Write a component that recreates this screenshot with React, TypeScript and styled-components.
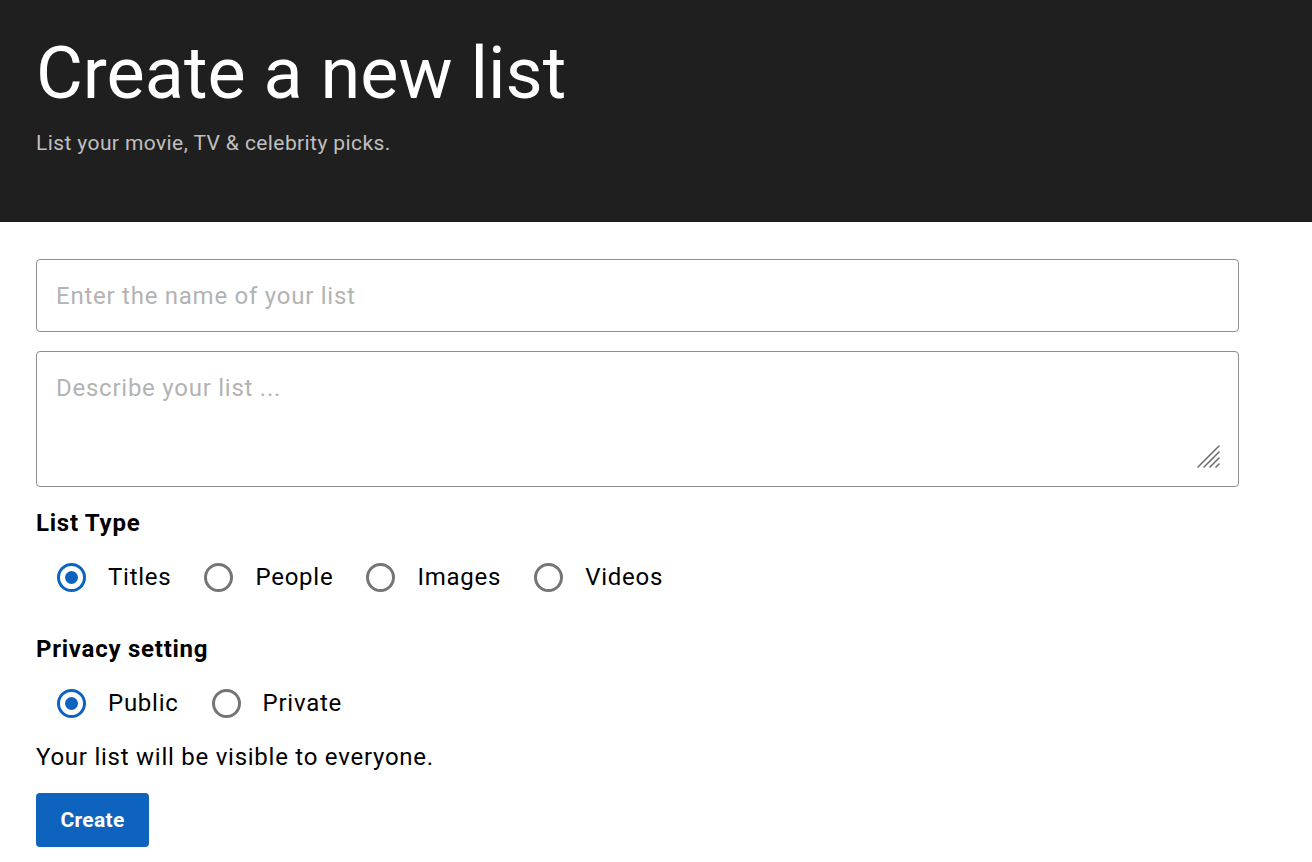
import React from "react";
import styled, { createGlobalStyle } from "styled-components";

const Global = createGlobalStyle`
  html, body { margin: 0; padding: 0; background: #ffffff; }
  body { font-family: Roboto, "Noto Sans", Arial, sans-serif; color: #000; }
  * { box-sizing: border-box; }
`;

const Header = styled.header`
  background: #1f1f1f;
  height: 222px;
  padding: 38px 36px 0;
`;

const Title = styled.h1`
  margin: 0;
  font-size: 72px;
  line-height: 72px;
  font-weight: 400;
  color: #ffffff;
`;

const Subtitle = styled.p`
  margin: 21px 0 0;
  font-size: 21px;
  line-height: 24px;
  color: rgba(255, 255, 255, 0.72);
  letter-spacing: 0.4px;
`;

const Form = styled.form`
  padding: 37px 0 0 36px;
  width: 1239px;
  display: flex;
  flex-direction: column;
`;

const TextInput = styled.input`
  height: 73px;
  width: 100%;
  border: 1px solid #8f8f8f;
  border-radius: 4px;
  padding: 0 19px;
  font-family: inherit;
  font-size: 24px;
  letter-spacing: 0.75px;
  outline: none;
  &::placeholder { color: #b3b3b3; }
`;

const AreaWrap = styled.div`
  position: relative;
  margin-top: 19px;
`;

const TextArea = styled.textarea`
  display: block;
  height: 136px;
  width: 100%;
  border: 1px solid #8f8f8f;
  border-radius: 4px;
  padding: 22px 19px;
  font-family: inherit;
  font-size: 24px;
  line-height: 28px;
  letter-spacing: 0.75px;
  outline: none;
  resize: none;
  &::placeholder { color: #b3b3b3; }
`;

const Grip = styled.svg`
  position: absolute;
  right: 19px;
  bottom: 19px;
  width: 23px;
  height: 23px;
  pointer-events: none;
`;

const SectionLabel = styled.div<{ $top: number }>`
  margin-top: ${(p) => p.$top}px;
  font-size: 24px;
  line-height: 28px;
  font-weight: 700;
  letter-spacing: 0.75px;
`;

const RadioRow = styled.div`
  display: flex;
  align-items: center;
  gap: 33px;
  margin-top: 22px;
  padding-left: 21px;
  height: 36px;
`;

const RadioItem = styled.label`
  display: flex;
  align-items: center;
  gap: 22px;
  font-size: 24px;
  letter-spacing: 0.75px;
  line-height: 28px;
  cursor: pointer;
`;

const RadioCircle = styled.span<{ $checked: boolean }>`
  width: 29px;
  height: 29px;
  border-radius: 50%;
  border: 3px solid ${(p) => (p.$checked ? "#0e63be" : "#757575")};
  display: flex;
  align-items: center;
  justify-content: center;
  &::after {
    content: "";
    width: 13px;
    height: 13px;
    border-radius: 50%;
    background: ${(p) => (p.$checked ? "#0e63be" : "transparent")};
  }
`;

const Note = styled.p`
  margin: 22px 0 0;
  font-size: 24px;
  line-height: 28px;
  letter-spacing: 0.75px;
`;

const CreateButton = styled.button`
  margin-top: 22px;
  align-self: flex-start;
  width: 113px;
  height: 54px;
  border: none;
  border-radius: 4px;
  background: #0e63be;
  color: #fff;
  font-family: inherit;
  font-size: 21px;
  font-weight: 700;
  letter-spacing: 0.3px;
  cursor: pointer;
`;

function Radio({ label, checked }: { label: string; checked?: boolean }) {
  return (
    <RadioItem>
      <RadioCircle $checked={!!checked} />
      {label}
    </RadioItem>
  );
}

export default function App() {
  return (
    <>
      <Global />
      <Header>
        <Title>Create a new list</Title>
        <Subtitle>List your movie, TV &amp; celebrity picks.</Subtitle>
      </Header>
      <Form onSubmit={(e) => e.preventDefault()}>
        <TextInput placeholder="Enter the name of your list" />
        <AreaWrap>
          <TextArea placeholder="Describe your list ..." />
          <Grip viewBox="0 0 23 23">
            <g stroke="#6f6f6f" strokeWidth="1.6" strokeLinecap="round">
              <line x1="1" y1="22" x2="22" y2="1" />
              <line x1="7" y1="22" x2="22" y2="7" />
              <line x1="13" y1="22" x2="22" y2="13" />
              <line x1="19" y1="22" x2="22" y2="19" />
            </g>
          </Grip>
        </AreaWrap>
        <SectionLabel $top={22}>List Type</SectionLabel>
        <RadioRow>
          <Radio label="Titles" checked />
          <Radio label="People" />
          <Radio label="Images" />
          <Radio label="Videos" />
        </RadioRow>
        <SectionLabel $top={40}>Privacy setting</SectionLabel>
        <RadioRow>
          <Radio label="Public" checked />
          <Radio label="Private" />
        </RadioRow>
        <Note>Your list will be visible to everyone.</Note>
        <CreateButton type="submit">Create</CreateButton>
      </Form>
    </>
  );
}
